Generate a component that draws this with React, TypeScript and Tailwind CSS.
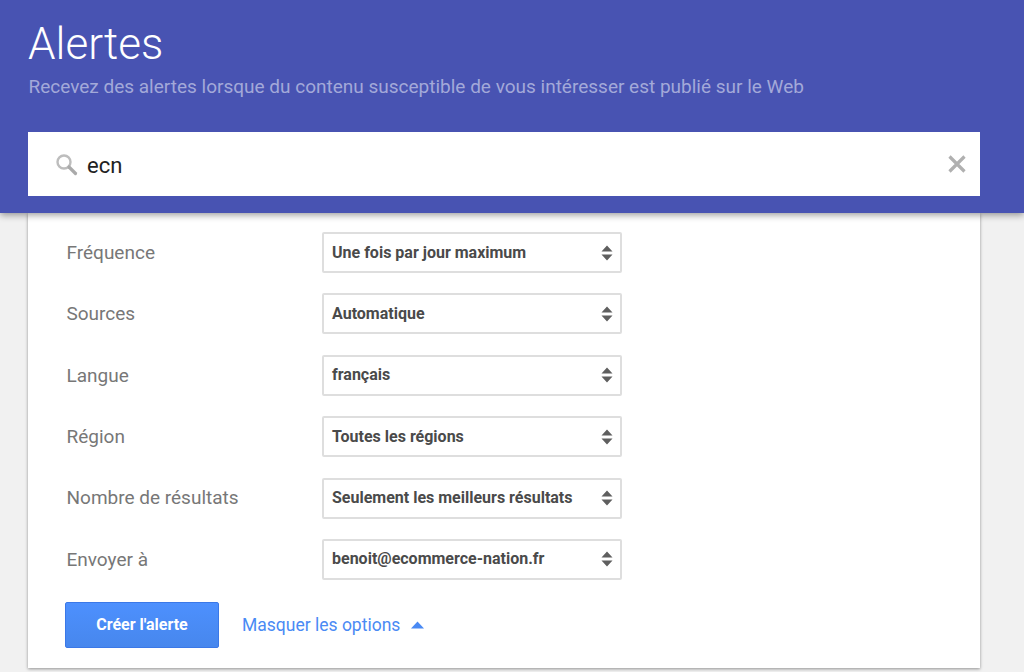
const rows: [string, string][] = [
  ["Fréquence", "Une fois par jour maximum"],
  ["Sources", "Automatique"],
  ["Langue", "français"],
  ["Région", "Toutes les régions"],
  ["Nombre de résultats", "Seulement les meilleurs résultats"],
  ["Envoyer à", "benoit@ecommerce-nation.fr"],
];

function Updown() {
  return (
    <svg width="12" height="18" viewBox="0 0 12 18" className="shrink-0">
      <path d="M6 1.5 L11.5 7.5 H0.5 Z M0.5 10.5 H11.5 L6 16.5 Z" fill="#5f5f5f" />
    </svg>
  );
}

export default function App() {
  return (
    <div className="relative h-[672px] w-[1024px] overflow-hidden bg-[#f1f1f1] font-['Roboto',sans-serif]">
      <header className="relative z-10 h-[213px] bg-[#4853b2] px-[28px] pt-[17px] shadow-[0_2px_7px_rgba(0,0,0,0.4)]">
        <h1 className="h-[54px] text-[44px] leading-[54px] font-light text-white">Alertes</h1>
        <p className="mt-[4px] ml-[0.5px] h-[24px] text-[19px] leading-[24px] text-[#a3a9d9]">
          Recevez des alertes lorsque du contenu susceptible de vous intéresser est publié sur le Web
        </p>
        <div className="mt-[33px] flex h-[64px] w-[952px] items-center bg-white pr-[13px] pl-[27px]">
          <svg width="23" height="23" viewBox="0 0 23 23" className="shrink-0">
            <circle cx="9" cy="9" r="6.5" fill="none" stroke="#bdbdbd" strokeWidth="2.4" />
            <path d="M14 14 L20.5 20.5" stroke="#aaaaaa" strokeWidth="3.2" strokeLinecap="round" />
          </svg>
          <span className="ml-[9px] flex-1 pt-[3px] text-[22px] leading-none text-[#222222]">ecn</span>
          <svg width="20" height="20" viewBox="0 0 20 20" className="shrink-0">
            <path d="M2.5 2.5 L17.5 17.5 M17.5 2.5 L2.5 17.5" stroke="#b0b0b0" strokeWidth="3.2" />
          </svg>
        </div>
      </header>
      <main className="ml-[28px] flex h-[455px] w-[952px] flex-col bg-white pt-[19px] pl-[37px] shadow-[0_1px_3px_rgba(0,0,0,0.4)]">
        <div className="flex flex-col gap-[20.4px]">
          {rows.map(([label, value]) => (
            <div key={label} className="flex h-[41px] items-center">
              <span className="mt-[1px] ml-[1.5px] w-[255.5px] text-[19px] text-[#777777]">{label}</span>
              <div className="flex h-[41px] w-[300px] items-center justify-between rounded-[2px] border-2 border-[#dedede] bg-white pr-[7px] pl-[8px]">
                <span className="text-[16px] font-bold text-[#4a4a4a]">{value}</span>
                <Updown />
              </div>
            </div>
          ))}
        </div>
        <div className="mt-[22px] flex items-center">
          <button className="h-[46px] w-[154px] rounded-[2px] border border-[#3b78e7] bg-gradient-to-b from-[#4d90fe] to-[#4787ed] text-[16px] font-bold text-white">
            Créer l'alerte
          </button>
          <span className="ml-[23px] text-[17.5px] text-[#4a8af4]">Masquer les options</span>
          <svg width="13" height="8" viewBox="0 0 13 8" className="ml-[11px]">
            <path d="M6.5 0.5 L13 7.5 H0 Z" fill="#4a8af4" />
          </svg>
        </div>
      </main>
    </div>
  );
}
